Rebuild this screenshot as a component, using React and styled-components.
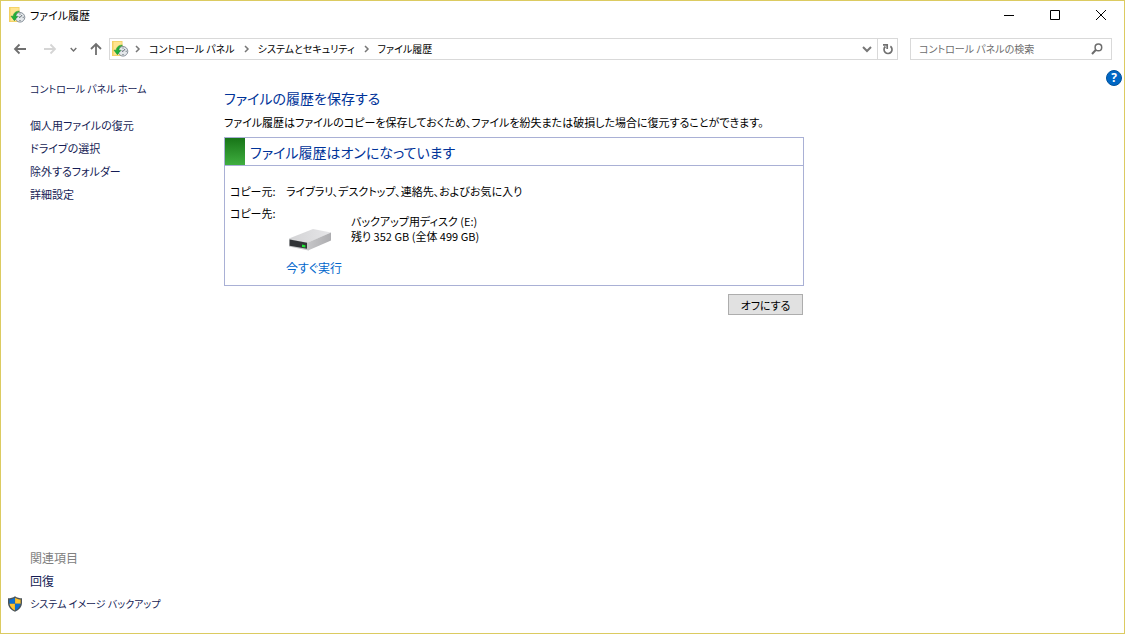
import React from "react";
import styled, { createGlobalStyle } from "styled-components";

const GlobalStyle = createGlobalStyle`
  * {
    box-sizing: border-box;
  }

  body {
    margin: 0;
    background: #fff;
    color: #000;
    font: 11px/16px "Noto Sans CJK JP", sans-serif;
    font-feature-settings: "palt";
  }

  button,
  input {
    font: inherit;
    font-feature-settings: inherit;
  }
`;

const HistoryIcon = () => (
  <svg width="18" height="16" viewBox="0 0 18 16" aria-hidden="true">
    <path d="M0 0h10.5v15H0z" fill="#f2cf62" />
    <path d="M1.5 .8h8.2v13.4H1.5z" fill="#ffe48f" />
    <circle cx="11" cy="10.3" r="4.8" fill="#e4e8eb" stroke="#87919a" />
    <path
      d="M11 6.6v1M11 13v1M7.3 10.3h1M13.7 10.3h1M11 10.5l2-2.4M11 10.5L9.6 9.6"
      stroke="#59636b"
      fill="none"
    />
    <path
      d="M10.5 4.3C7 3.7 4.6 6 4.2 9.2H2l3.4 4.5 3.3-4.5H6.7c.1-2 1.4-3.9 3.8-4.9z"
      fill="#21b13a"
      stroke="#108c2b"
      strokeWidth=".5"
    />
  </svg>
);

const Arrow = ({ direction }) => (
  <svg width="14" height="14" viewBox="0 0 14 14" fill="none" stroke="currentColor" strokeWidth="1.8" aria-hidden="true">
    {direction === "back" && <path d="M13 7H2M6.5 2.5L2 7l4.5 4.5" />}
    {direction === "forward" && <path d="M1 7h11M7.5 2.5L12 7l-4.5 4.5" />}
    {direction === "up" && <path d="M7 13V2M2 7l5-5 5 5" />}
  </svg>
);

const ChevronDown = ({ size = 10 }) => (
  <svg width={size} height={size} viewBox="0 0 10 10" fill="none" stroke="currentColor" strokeWidth="2" aria-hidden="true">
    <path d="M1 3l4 4 4-4" />
  </svg>
);

const ChevronRight = () => (
  <svg width="6" height="8" viewBox="0 0 6 8" fill="none" stroke="#777" strokeWidth="1.5" aria-hidden="true">
    <path d="M1 1l3 3-3 3" />
  </svg>
);

const RefreshIcon = () => (
  <svg width="12" height="12" viewBox="0 0 12 12" fill="none" stroke="#707070" strokeWidth="1.7" aria-hidden="true">
    <path d="M8.4 3.3A4 4 0 1 1 3.4 3.5" />
    <path d="M1 1.8h4.2V6" />
  </svg>
);

const SearchIcon = () => (
  <svg width="12" height="12" viewBox="0 0 12 12" fill="none" stroke="#6d6d6d" aria-hidden="true">
    <circle cx="7.4" cy="4.4" r="3.3" strokeWidth="1.5" />
    <path d="M5 6.8L1 11" strokeWidth="2" />
  </svg>
);

const DriveIcon = () => (
  <svg width="44" height="24" viewBox="0 0 44 24" aria-hidden="true">
    <defs>
      <linearGradient id="driveTop" x1="0" x2="1">
        <stop offset="0" stopColor="#d3d3d5" />
        <stop offset="1" stopColor="#e6e6e8" />
      </linearGradient>
      <linearGradient id="driveSide" x1="0" x2="1">
        <stop offset="0" stopColor="#c6c6c8" />
        <stop offset="1" stopColor="#adadb0" />
      </linearGradient>
    </defs>
    <path d="M1 10.5L25 1l18 3.5L20.5 14.5z" fill="url(#driveTop)" />
    <path d="M20 14.5L43 4.5v8L20 22.5z" fill="url(#driveSide)" />
    <path d="M1 10.5l19.5 4v8L1 18.5z" fill="#c6c7c9" />
    <path d="M1.6 11.6l17.4 3.2v6L1.6 17.8z" fill="#323538" />
    <path d="M14 16.6l3.4.6v2.4L14 19z" fill="#20e636" />
  </svg>
);

const ShieldIcon = () => (
  <svg width="16" height="16" viewBox="0 0 16 16" aria-hidden="true">
    <path d="M8 .2c2 1.4 4.4 2.1 7 2.1v4.5c0 4.2-3 7.3-7 9-4-1.7-7-4.8-7-9V2.3C3.600 2.300 6 1.600 8 .2z" fill="#4b5358" />
    <path d="M7.900 1.700v6.100H2.400V3.500c2-.1 3.800-.7 5.500-1.800z" fill="#0a6fd1" />
    <path d="M8.100 1.700v6.100h5.500V3.500c-2-.1-3.800-.7-5.500-1.800z" fill="#ffc42e" />
    <path d="M2.500 7.800h5.400v6.600c-3-1.400-5-3.700-5.400-6.600z" fill="#ffc42e" />
    <path d="M13.500 7.800H8.100v6.600c3-1.400 5-3.700 5.400-6.600z" fill="#0a6fd1" />
  </svg>
);

const Window = styled.div`
  display: flex;
  flex-direction: column;
  min-height: 100vh;
  border: 1px solid #dccb61;
`;

const TitleBar = styled.header`
  display: flex;
  align-items: center;
  gap: 3px;
  height: 28px;
  padding-left: 8px;
`;

const WindowTitle = styled.h1`
  flex: 1;
  margin: 0;
  font-size: 11px;
  font-weight: 400;
`;

const WindowControls = styled.div`
  display: flex;
`;

const WindowButton = styled.button`
  display: flex;
  align-items: center;
  justify-content: center;
  width: 46px;
  height: 28px;
  padding: 0;
  border: 0;
  background: transparent;
`;

const NavBar = styled.nav`
  display: flex;
  align-items: center;
  height: 22px;
  margin-top: 9px;
  padding: 0 12px;
`;

const NavButtons = styled.div`
  display: flex;
  align-items: center;
  width: 96px;
  flex: none;
`;

const NavButton = styled.button`
  display: flex;
  padding: 0;
  border: 0;
  background: transparent;
  color: ${({ disabled }) => (disabled ? "#d5d5d5" : "#6f6f6f")};
  margin-right: ${({ $gap }) => $gap}px;
`;

const AddressBar = styled.div`
  display: flex;
  flex: 1;
  align-items: stretch;
  height: 22px;
  border: 1px solid #d9d9d9;
`;

const Breadcrumbs = styled.ol`
  display: flex;
  flex: 1;
  align-items: center;
  margin: 0;
  padding: 0 0 0 2px;
  list-style: none;
`;

const Crumb = styled.li`
  display: flex;
  align-items: center;
  gap: 8px;
  padding-left: ${({ $first }) => ($first ? 5 : 9)}px;
`;

const CrumbLink = styled.a`
  color: #000;
  font-size: 10px;
  text-decoration: none;
`;

const AddressButton = styled.button`
  display: flex;
  align-items: center;
  justify-content: center;
  width: 20px;
  padding: 0;
  border: 0;
  border-left: ${({ $divided }) => ($divided ? "1px solid #d9d9d9" : "0")};
  background: transparent;
  color: #777;
`;

const SearchBox = styled.form`
  display: flex;
  align-items: center;
  width: 202px;
  height: 22px;
  margin-left: 12px;
  padding: 0 8px;
  border: 1px solid #d9d9d9;
`;

const SearchInput = styled.input`
  flex: 1;
  min-width: 0;
  padding: 0;
  border: 0;
  outline: 0;
  font-size: 10px;

  &::placeholder {
    color: #6d6d6d;
    opacity: 1;
  }
`;

const SearchButton = styled.button`
  display: flex;
  padding: 0;
  border: 0;
  background: transparent;
`;

const Body = styled.div`
  display: flex;
  flex: 1;
  align-items: stretch;
`;

const Sidebar = styled.aside`
  display: flex;
  flex: none;
  flex-direction: column;
  width: 223px;
  padding: 17px 8px 18px 6px;
`;

const SideList = styled.ul`
  margin: ${({ $bottom }) => ($bottom ? "auto 0 0" : "13px 0 0")};
  padding: 0;
  list-style: none;
`;

const SideItem = styled.li`
  display: grid;
  grid-template-columns: 16px 1fr;
  column-gap: 7px;
  align-items: center;
  height: 23px;
`;

const SideLink = styled.a`
  grid-column: 2;
  color: #151c55;
  font-size: ${({ $size }) => $size || 11}px;
  text-decoration: none;
`;

const SideHeading = styled.span`
  grid-column: 2;
  color: #808080;
  font-size: 12px;
`;

const Content = styled.main`
  flex: 1;
  max-width: 580px;
  padding-top: 27px;
`;

const Heading = styled.h2`
  margin: 0;
  color: #003399;
  font-size: 14px;
  font-weight: 400;
  line-height: 22px;
`;

const Intro = styled.p`
  margin: 5px 0 7px;
  white-space: nowrap;
`;

const Panel = styled.section`
  border: 1px solid #a9b0d5;
`;

const PanelHeader = styled.header`
  display: flex;
  align-items: center;
  gap: 5px;
  height: 28px;
  border-bottom: 1px solid #a9b0d5;
`;

const StatusMark = styled.span`
  align-self: stretch;
  width: 20px;
  background: linear-gradient(#187518, #3fae3f);
`;

const PanelTitle = styled.h3`
  margin: 0;
  color: #003399;
  font-size: 14px;
  font-weight: 400;
  line-height: 24px;
`;

const Details = styled.dl`
  display: grid;
  grid-template-columns: 50px 1fr;
  gap: 6px;
  margin: 0;
  padding: 17px 5px 9px;
`;

const Term = styled.dt`
  white-space: nowrap;
`;

const Detail = styled.dd`
  margin: 0;
`;

const Drive = styled.div`
  display: flex;
  align-items: flex-end;
  gap: 19px;
  padding: 9px 0 0 2px;
`;

const DriveText = styled.p`
  margin: 0 0 8px;
  line-height: 15px;
`;

const RunLink = styled.a`
  display: inline-block;
  margin-top: 8px;
  color: #0066cc;
  font-size: 12px;
  text-decoration: none;
`;

const Actions = styled.div`
  display: flex;
  justify-content: flex-end;
  padding: 8px 1px 0 0;
`;

const ActionButton = styled.button`
  width: 75px;
  height: 21px;
  padding: 0;
  border: 1px solid #adadad;
  background: #e1e1e1;
  color: #000;
  line-height: 16px;
`;

const HelpButton = styled.button`
  width: 16px;
  height: 16px;
  margin: 10px 2px 0 auto;
  padding: 0;
  border: 1px solid #00529c;
  border-radius: 50%;
  background: #0067c5;
  color: #fff;
  font: bold 12px/14px "Open Sans", sans-serif;
`;

const crumbs = ["コントロール パネル", "システムとセキュリティ", "ファイル履歴"];

const tasks = [
  "個人用ファイルの復元",
  "ドライブの選択",
  "除外するフォルダー",
  "詳細設定",
];

const App = () => {
  return (
    <>
      <GlobalStyle />
      <Window>
        <TitleBar>
          <HistoryIcon />
          <WindowTitle>ファイル履歴</WindowTitle>
          <WindowControls>
            <WindowButton aria-label="最小化">
              <svg width="10" height="10" stroke="#000" fill="none">
                <path d="M0 5.5h10" />
              </svg>
            </WindowButton>
            <WindowButton aria-label="最大化">
              <svg width="10" height="10" stroke="#000" fill="none">
                <path d="M.5.5h9v9h-9z" />
              </svg>
            </WindowButton>
            <WindowButton aria-label="閉じる">
              <svg width="10" height="10" stroke="#000" fill="none">
                <path d="M0 0l10 10M10 0L0 10" />
              </svg>
            </WindowButton>
          </WindowControls>
        </TitleBar>

        <NavBar>
          <NavButtons>
            <NavButton aria-label="戻る" $gap={16}>
              <Arrow direction="back" />
            </NavButton>
            <NavButton aria-label="進む" disabled $gap={13}>
              <Arrow direction="forward" />
            </NavButton>
            <NavButton aria-label="最近表示した場所" $gap={12}>
              <ChevronDown size={7} />
            </NavButton>
            <NavButton aria-label="上へ" $gap={0}>
              <Arrow direction="up" />
            </NavButton>
          </NavButtons>
          <AddressBar>
            <Breadcrumbs>
              <HistoryIcon />
              {crumbs.map((crumb, index) => (
                <Crumb key={crumb} $first={index === 0}>
                  <ChevronRight />
                  <CrumbLink href="#">{crumb}</CrumbLink>
                </Crumb>
              ))}
            </Breadcrumbs>
            <AddressButton aria-label="以前の場所">
              <ChevronDown />
            </AddressButton>
            <AddressButton aria-label="更新" $divided>
              <RefreshIcon />
            </AddressButton>
          </AddressBar>
          <SearchBox role="search">
            <SearchInput
              type="text"
              aria-label="コントロール パネルの検索"
              placeholder="コントロール パネルの検索"
            />
            <SearchButton type="button" aria-label="検索">
              <SearchIcon />
            </SearchButton>
          </SearchBox>
        </NavBar>

        <Body>
          <Sidebar>
            <SideItem as="div">
              <SideLink href="#" $size={10}>コントロール パネル ホーム</SideLink>
            </SideItem>
            <SideList>
              {tasks.map((task) => (
                <SideItem key={task}>
                  <SideLink href="#">{task}</SideLink>
                </SideItem>
              ))}
            </SideList>
            <SideList $bottom>
              <SideItem>
                <SideHeading>関連項目</SideHeading>
              </SideItem>
              <SideItem>
                <SideLink href="#" $size={12}>回復</SideLink>
              </SideItem>
              <SideItem>
                <ShieldIcon />
                <SideLink href="#" $size={10}>システム イメージ バックアップ</SideLink>
              </SideItem>
            </SideList>
          </Sidebar>

          <Content>
            <Heading>ファイルの履歴を保存する</Heading>
            <Intro>
              ファイル履歴はファイルのコピーを保存しておくため、ファイルを紛失または破損した場合に復元することができます。
            </Intro>
            <Panel>
              <PanelHeader>
                <StatusMark />
                <PanelTitle>ファイル履歴はオンになっています</PanelTitle>
              </PanelHeader>
              <Details>
                <Term>コピー元:</Term>
                <Detail>ライブラリ、デスクトップ、連絡先、およびお気に入り</Detail>
                <Term>コピー先:</Term>
                <Detail>
                  <Drive>
                    <DriveIcon />
                    <DriveText>
                      バックアップ用ディスク (E:)
                      <br />
                      残り 352 GB (全体 499 GB)
                    </DriveText>
                  </Drive>
                  <RunLink href="#">今すぐ実行</RunLink>
                </Detail>
              </Details>
            </Panel>
            <Actions>
              <ActionButton>オフにする</ActionButton>
            </Actions>
          </Content>
          <HelpButton aria-label="ヘルプ">?</HelpButton>
        </Body>
      </Window>
    </>
  );
};

export default App;
